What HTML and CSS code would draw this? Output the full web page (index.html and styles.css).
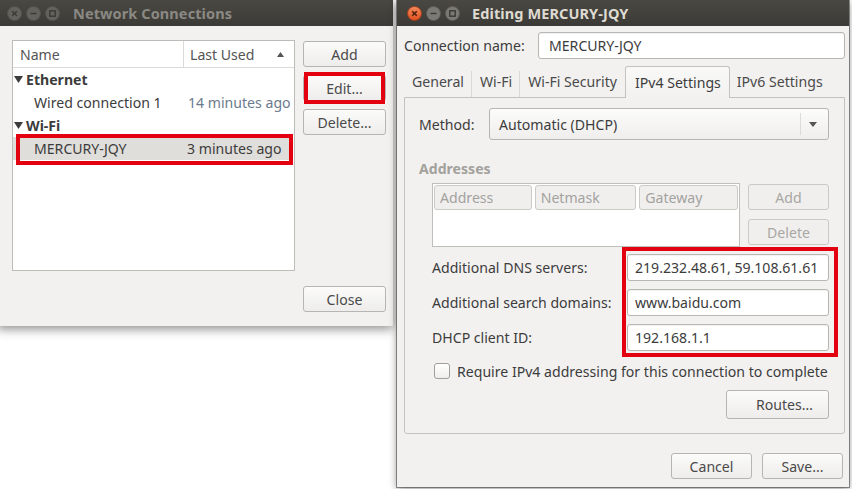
FILE: index.html
```html
<!DOCTYPE html>
<html>
<head>
<meta charset="utf-8">
<link rel="stylesheet" href="styles.css">
</head>
<body>
<div class="win win-left">
  <div class="titlebar inactive">
    <div class="wbtns">
      <svg class="wbtn" viewBox="0 0 15 15"><circle cx="7.5" cy="7.5" r="7" class="c-gray"/><path d="M5.2 5.2 L9.8 9.8 M9.8 5.2 L5.2 9.8" class="sym"/></svg>
      <svg class="wbtn" viewBox="0 0 15 15"><circle cx="7.5" cy="7.5" r="7" class="c-gray"/><path d="M4.5 7.5 H10.5" class="sym"/></svg>
      <svg class="wbtn" viewBox="0 0 15 15"><circle cx="7.5" cy="7.5" r="7" class="c-gray"/><rect x="4.8" y="4.8" width="5.4" height="5.4" class="sym"/></svg>
    </div>
    <div class="wtitle">Network Connections</div>
  </div>
  <div class="left-body">
    <div class="conn-list">
      <div class="list-head">
        <div class="col-name">Name</div>
        <div class="col-used"><span>Last Used</span><svg class="sort" viewBox="0 0 7 5"><path d="M0 5 L3.5 0 L7 5 Z"/></svg></div>
      </div>
      <div class="grp"><svg class="tri" viewBox="0 0 9 7"><path d="M0 0 H9 L4.5 7 Z"/></svg><span>Ethernet</span></div>
      <div class="item"><span class="iname">Wired connection 1</span><span class="itime">14 minutes ago</span></div>
      <div class="grp"><svg class="tri" viewBox="0 0 9 7"><path d="M0 0 H9 L4.5 7 Z"/></svg><span>Wi-Fi</span></div>
      <div class="item selected"><span class="iname">MERCURY-JQY</span><span class="itime sel">3 minutes ago</span><div class="mark mark-row"></div></div>
    </div>
    <div class="side-btns">
      <div class="btn">Add</div>
      <div class="btn marked">Edit...<div class="mark mark-edit"></div></div>
      <div class="btn">Delete...</div>
    </div>
    <div class="close-row"><div class="btn btn-close">Close</div></div>
  </div>
</div>

<div class="win win-right">
  <div class="titlebar active">
    <div class="wbtns">
      <svg class="wbtn" viewBox="0 0 15 15"><defs><linearGradient id="og" x1="0" y1="0" x2="0" y2="1"><stop offset="0" stop-color="#f58a5c"/><stop offset="1" stop-color="#e0501f"/></linearGradient></defs><circle cx="7.5" cy="7.5" r="7" fill="url(#og)" stroke="#9c3a16" stroke-width="0.8"/><path d="M5.2 5.2 L9.8 9.8 M9.8 5.2 L5.2 9.8" class="sym-dark"/></svg>
      <svg class="wbtn" viewBox="0 0 15 15"><circle cx="7.5" cy="7.5" r="7" class="c-lgray"/><path d="M4.5 7.5 H10.5" class="sym"/></svg>
      <svg class="wbtn" viewBox="0 0 15 15"><circle cx="7.5" cy="7.5" r="7" class="c-lgray"/><rect x="4.8" y="4.8" width="5.4" height="5.4" class="sym"/></svg>
    </div>
    <div class="wtitle">Editing MERCURY-JQY</div>
  </div>
  <div class="right-body">
    <div class="name-row">
      <div class="name-label">Connection name:</div>
      <div class="entry name-entry">MERCURY-JQY</div>
    </div>
    <div class="tabs">
      <div class="tab">General</div>
      <div class="tab">Wi-Fi</div>
      <div class="tab">Wi-Fi Security</div>
      <div class="tab tab-active">IPv4 Settings</div>
      <div class="tab tab-last">IPv6 Settings</div>
    </div>
    <div class="panel">
      <div class="method-row">
        <div class="method-label">Method:</div>
        <div class="combo"><span class="combo-text">Automatic (DHCP)</span><span class="combo-sep"></span><svg class="combo-arrow" viewBox="0 0 8 5"><path d="M0 0 H8 L4 5 Z"/></svg></div>
      </div>
      <div class="section-title">Addresses</div>
      <div class="addr-block">
        <div class="addr-table">
          <div class="addr-head">
            <div class="hcell w1">Address</div>
            <div class="hcell w2">Netmask</div>
            <div class="hcell w3">Gateway</div>
          </div>
        </div>
        <div class="addr-btns">
          <div class="btn disabled">Add</div>
          <div class="btn disabled">Delete</div>
        </div>
      </div>
      <div class="form-grid">
        <div class="flabel">Additional DNS servers:</div>
        <div class="entry">219.232.48.61, 59.108.61.61</div>
        <div class="flabel">Additional search domains:</div>
        <div class="entry">www.baidu.com</div>
        <div class="flabel">DHCP client ID:</div>
        <div class="entry">192.168.1.1</div>
        <div class="mark mark-grid"></div>
      </div>
      <div class="check-row">
        <div class="checkbox"></div>
        <div class="check-label">Require IPv4 addressing for this connection to complete</div>
      </div>
      <div class="routes-row"><div class="btn btn-routes">Routes…</div></div>
    </div>
    <div class="dialog-btns">
      <div class="btn btn-dlg">Cancel</div>
      <div class="btn btn-dlg">Save...</div>
    </div>
  </div>
</div>
</body>
</html>
```
FILE: styles.css
```css
html, body {
  margin: 0;
  padding: 0;
}
body {
  width: 852px;
  height: 489px;
  position: relative;
  overflow: hidden;
  background: #ffffff;
  font-family: "Noto Sans", "DejaVu Sans", sans-serif;
  font-size: 14.1px;
  color: #3c3c3c;
}

/* windows on the desktop */
.win {
  position: absolute;
  top: 0;
  background: #f2f1f0;
  display: flex;
  flex-direction: column;
  box-sizing: border-box;
}
.win-left {
  left: -3px;
  width: 396px;
  height: 326px;
  box-shadow: 0 3px 10px rgba(0, 0, 0, 0.45);
}
.win-right {
  left: 397px;
  width: 452px;
  height: 487px;
  box-shadow: 0 0 0 1px rgba(60, 60, 60, 0.55), 0 2px 8px rgba(0, 0, 0, 0.45);
}

/* title bars */
.titlebar {
  height: 26px;
  flex: none;
  display: flex;
  align-items: center;
  padding-left: 10px;
  background: linear-gradient(#4a4843, #3b3a36);
}
.wbtns {
  display: flex;
  gap: 4px;
}
.wbtn {
  width: 15px;
  height: 15px;
  display: block;
}
.c-gray {
  fill: #64625d;
  stroke: #55534f;
  stroke-width: 0.8;
}
.c-lgray {
  fill: #7c7a75;
  stroke: #5e5c58;
  stroke-width: 0.8;
}
.sym {
  fill: none;
  stroke: #3a3935;
  stroke-width: 1.4;
}
.sym-dark {
  fill: none;
  stroke: #4a1f0c;
  stroke-width: 1.5;
}
.wtitle {
  margin-left: 13px;
  font-weight: bold;
  font-size: 14.5px;
  letter-spacing: 0.1px;
}
.inactive .wtitle {
  color: #8b8983;
}
.active .wtitle {
  margin-left: 12px;
  color: #dfdbd2;
}

/* buttons */
.btn {
  box-sizing: border-box;
  height: 26px;
  border: 1px solid #b6b5b1;
  border-radius: 3px;
  background: linear-gradient(#fbfbfa, #eeedeb);
  color: #4a4a4a;
  display: flex;
  align-items: center;
  justify-content: center;
  position: relative;
}
.btn.disabled {
  color: #a8a7a3;
  background: #f0efee;
  border-color: #cac9c5;
}

/* annotation boxes */
.mark {
  position: absolute;
  border: 4px solid #e3000f;
  box-sizing: border-box;
  pointer-events: none;
}

/* left window */
.left-body {
  flex: 1;
  display: grid;
  grid-template-columns: 283px 83px;
  grid-template-rows: 231px auto;
  column-gap: 8px;
  padding: 14px 7px 0 15px;
}
.conn-list {
  box-sizing: border-box;
  background: #ffffff;
  border: 1px solid #bdbcb8;
}
.list-head {
  height: 26px;
  display: flex;
  border-bottom: 1px solid #dcdbd7;
  color: #555555;
}
.col-name {
  width: 171px;
  padding-left: 7px;
  box-sizing: border-box;
  border-right: 1px solid #dcdbd7;
  display: flex;
  align-items: center;
}
.col-used {
  flex: 1;
  padding: 0 10px 0 6px;
  display: flex;
  align-items: center;
  justify-content: space-between;
}
.sort {
  width: 7px;
  height: 5px;
  fill: #555555;
}
.grp {
  height: 23px;
  display: flex;
  align-items: center;
  padding-left: 1px;
  font-weight: bold;
  color: #3c3c3c;
}
.tri {
  width: 9px;
  height: 7px;
  fill: #3c3c3c;
  margin-right: 3px;
}
.item {
  height: 23px;
  display: flex;
  align-items: center;
  padding-left: 21px;
  position: relative;
}
.iname {
  width: 154px;
  flex: none;
}
.itime {
  color: #6c7a8d;
}
.itime.sel {
  color: #3c3c3c;
  margin-left: -1px;
}
.item.selected {
  background: #e0dedb;
  margin-right: 1px;
}
.mark-row {
  top: -3px;
  bottom: -5px;
  left: 3px;
  right: 0;
}
.side-btns {
  display: flex;
  flex-direction: column;
  gap: 8px;
  padding-top: 1px;
}
.mark-edit {
  top: -4px;
  bottom: -4px;
  left: 0;
  right: 0;
}
.close-row {
  grid-column: 2;
  padding-top: 15px;
}

/* right window */
.right-body {
  flex: 1;
  display: flex;
  flex-direction: column;
  padding: 6px 4px 0 7px;
}
.name-row {
  height: 27px;
  display: flex;
  align-items: center;
}
.name-label {
  width: 134px;
  flex: none;
}
.entry {
  box-sizing: border-box;
  height: 27px;
  background: #ffffff;
  border: 1px solid #b7b6b2;
  border-radius: 3px;
  box-shadow: inset 0 1px 1px rgba(0, 0, 0, 0.06);
  padding-left: 7px;
  display: flex;
  align-items: center;
  color: #3c3c3c;
}
.name-entry {
  width: 307px;
  padding-left: 10px;
}
.tabs {
  margin-top: 7px;
  height: 31px;
  display: flex;
  align-items: flex-end;
  position: relative;
  z-index: 1;
}
.tab {
  height: 31px;
  box-sizing: border-box;
  padding: 0 8px;
  display: flex;
  align-items: center;
  position: relative;
  color: #4a4a4a;
}
.tab + .tab::before {
  content: "";
  position: absolute;
  left: -1px;
  top: 5px;
  bottom: 0;
  width: 1px;
  background: #dad9d5;
}
.tab-active::before, .tab-active + .tab::before {
  display: none;
}
.tab-active {
  padding: 0 8px 0 9px;
  margin-left: 0;
  height: 32px;
  margin-bottom: -1px;
  border: 1px solid #c3c2be;
  border-bottom: none;
  border-radius: 3px 3px 0 0;
  background: linear-gradient(#f9f9f8, #f2f1f0);
  color: #3c3c3c;
}
.tab-last {
  padding-left: 7px;
}
.panel {
  box-sizing: border-box;
  height: 337px;
  border: 1px solid #c3c2be;
  border-radius: 0 0 3px 3px;
  padding: 10px 15px 0 14px;
  display: flex;
  flex-direction: column;
}
.method-row {
  display: flex;
  align-items: center;
  height: 32px;
}
.method-label {
  width: 70px;
  flex: none;
}
.combo {
  flex: 1;
  height: 32px;
  box-sizing: border-box;
  border: 1px solid #b6b5b1;
  border-radius: 3px;
  background: linear-gradient(#fcfcfc, #efeeec);
  display: flex;
  align-items: center;
  padding-left: 9px;
}
.combo-text {
  flex: 1;
}
.combo-sep {
  width: 1px;
  height: 22px;
  background: #dcdbd7;
}
.combo-arrow {
  width: 8px;
  height: 5px;
  fill: #555555;
  margin: 0 11px 0 8px;
}
.section-title {
  margin-top: 19px;
  height: 20px;
  line-height: 20px;
  font-weight: bold;
  color: #a3a19c;
}
.addr-block {
  margin-top: 4px;
  margin-left: 13px;
  display: flex;
  gap: 8px;
}
.addr-table {
  box-sizing: border-box;
  width: 308px;
  height: 64px;
  border: 1px solid #c0bfbb;
  background: #ffffff;
  padding: 1px 1px 0 1px;
}
.addr-head {
  display: flex;
  gap: 3px;
}
.hcell {
  box-sizing: border-box;
  height: 25px;
  border: 1px solid #cbcac6;
  border-radius: 3px;
  background: #f0efee;
  color: #a3a29e;
  padding-left: 5px;
  display: flex;
  align-items: center;
}
.w1 { width: 98px; }
.w2 { width: 102px; }
.w3 { width: 99px; }
.addr-btns {
  width: 81px;
  display: flex;
  flex-direction: column;
  gap: 9px;
  padding-top: 1px;
}
.form-grid {
  margin-top: 7px;
  margin-left: 13px;
  display: grid;
  grid-template-columns: 195px 202px;
  row-gap: 8px;
  align-items: center;
  position: relative;
}
.flabel {
  color: #3c3c3c;
}
.mark-grid {
  left: 190px;
  right: -9px;
  top: -7px;
  bottom: -6px;
}
.check-row {
  margin-top: 12px;
  margin-left: 15px;
  display: flex;
  align-items: center;
  height: 16px;
}
.checkbox {
  box-sizing: border-box;
  width: 16px;
  height: 16px;
  border: 1px solid #a09f9b;
  border-radius: 3px;
  background: linear-gradient(#ffffff, #efeeec);
  flex: none;
}
.check-label {
  margin-left: 7px;
  white-space: nowrap;
}
.routes-row {
  margin-top: 11px;
  display: flex;
  justify-content: flex-end;
}
.btn-routes {
  width: 103px;
  height: 29px;
  padding-left: 14px;
}
.dialog-btns {
  margin-top: 19px;
  display: flex;
  justify-content: flex-end;
  gap: 10px;
  padding-right: 2px;
}
.btn-dlg {
  width: 81px;
  height: 26px;
}
```
